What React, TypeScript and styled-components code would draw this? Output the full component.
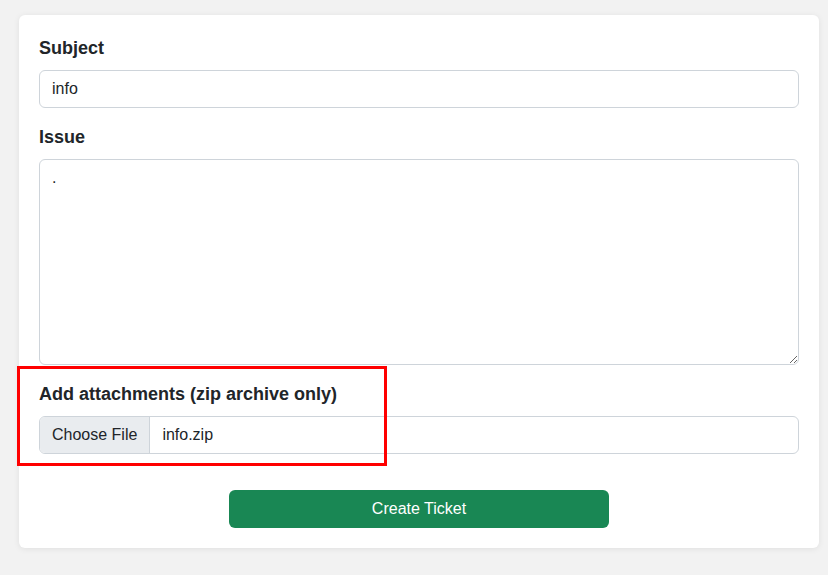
import React from "react";
import styled, { createGlobalStyle } from "styled-components";

const Global = createGlobalStyle`
  html, body { margin: 0; padding: 0; background: #f2f2f2; }
  body { font-family: "Liberation Sans", Arial, sans-serif; color: #212529; }
  * { box-sizing: border-box; }
`;

const Page = styled.div`
  padding: 15px 9px 27px 19px;
`;

const Card = styled.form`
  background: #fff;
  border-radius: 6px;
  box-shadow: 0 1px 6px rgba(0, 0, 0, 0.08);
  padding: 20px 20px 20px 20px;
  display: flex;
  flex-direction: column;
`;

const Group = styled.div<{ $gap?: number }>`
  position: relative;
  display: flex;
  flex-direction: column;
  margin-bottom: ${(p) => p.$gap ?? 16}px;
`;

const Label = styled.label`
  font-size: 18px;
  font-weight: 700;
  line-height: 27px;
  margin-bottom: 8px;
  color: #212529;
`;

const TextInput = styled.input`
  height: 38px;
  border: 1px solid #ced4da;
  border-radius: 6px;
  padding: 6px 12px;
  font-family: inherit;
  font-size: 16px;
  color: #212529;
  outline: none;
`;

const TextArea = styled.textarea`
  height: 206px;
  border: 1px solid #ced4da;
  border-radius: 6px;
  padding: 6px 12px;
  font-family: inherit;
  font-size: 16px;
  line-height: 24px;
  color: #212529;
  resize: vertical;
  outline: none;
`;

const FileBox = styled.div`
  display: flex;
  height: 38px;
  border: 1px solid #ced4da;
  border-radius: 6px;
  overflow: hidden;
  font-size: 16px;
`;

const FileButton = styled.span`
  display: flex;
  align-items: center;
  padding: 0 12px;
  background: #e9ecef;
  border-right: 1px solid #ced4da;
  color: #212529;
`;

const FileName = styled.span`
  display: flex;
  align-items: center;
  padding: 0 12px;
  color: #212529;
`;

const Highlight = styled.div`
  position: absolute;
  left: -22px;
  top: -15px;
  width: 370px;
  height: 100px;
  border: 3px solid #f00;
  pointer-events: none;
`;

const Submit = styled.button`
  align-self: center;
  width: 380px;
  height: 38px;
  margin-top: 20px;
  background: #198754;
  border: none;
  border-radius: 6px;
  color: #fff;
  font-family: inherit;
  font-size: 16px;
  cursor: pointer;
`;

export default function App() {
  return (
    <>
      <Global />
      <Page>
        <Card onSubmit={(e) => e.preventDefault()}>
          <Group>
            <Label>Subject</Label>
            <TextInput defaultValue="info" />
          </Group>
          <Group>
            <Label>Issue</Label>
            <TextArea defaultValue="." />
          </Group>
          <Group>
            <Highlight />
            <Label>Add attachments (zip archive only)</Label>
            <FileBox>
              <FileButton>Choose File</FileButton>
              <FileName>info.zip</FileName>
            </FileBox>
          </Group>
          <Submit type="submit">Create Ticket</Submit>
        </Card>
      </Page>
    </>
  );
}
